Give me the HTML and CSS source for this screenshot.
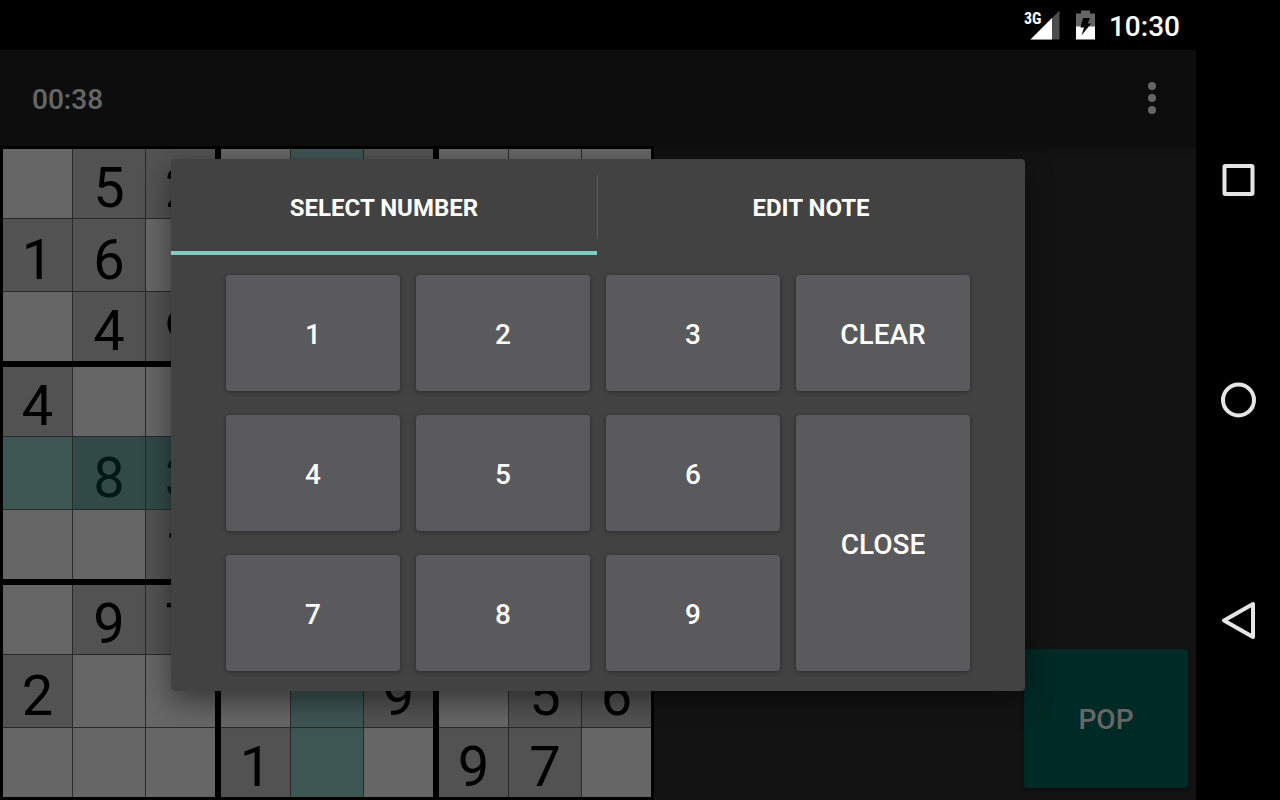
FILE: index.html
```html
<!DOCTYPE html>
<html lang="en">
<head>
<meta charset="utf-8">
<meta name="viewport" content="width=device-width, initial-scale=1">
<title>Sudoku</title>
<link rel="stylesheet" href="styles.css">
</head>
<body>
<div class="device">
  <div class="screen">
    <header class="status">
      <svg class="status-signal" viewBox="0 0 36 32" aria-hidden="true">
        <path fill="#4d4d4d" d="M35.500 1.500V30.500H6.500z"/>
        <path fill="#fff" d="M28 9V30.500H6.500z"/>
        <text class="status-net" x="0" y="15">3G</text>
      </svg>
      <svg class="status-battery" viewBox="0 0 20 30" aria-hidden="true">
        <path fill="#666" d="M1 3.500H6V0.500h9v3H20V17H1z"/>
        <path fill="#fff" d="M1 16.500H20V29.500H1z"/>
        <path fill="#000" d="M8 8H15L12.500 13.500H16L6.500 25.500L9 17.500H5.500z"/>
      </svg>
      <span class="status-clock">10:30</span>
    </header>
    <div class="app">
      <div class="toolbar">
        <span class="timer">00:38</span>
        <button class="menu" type="button" aria-label="More options">
          <svg viewBox="0 0 8 32" aria-hidden="true" fill="#fff"><circle cx="4" cy="4" r="4"/><circle cx="4" cy="16" r="4"/><circle cx="4" cy="28" r="4"/></svg>
        </button>
      </div>
      <main class="game">
        <div class="board">
          <div class="box">
            <div class="cell"></div><div class="cell given">5</div><div class="cell given">2</div>
            <div class="cell given">1</div><div class="cell given">6</div><div class="cell"></div>
            <div class="cell"></div><div class="cell given">4</div><div class="cell given">9</div>
          </div>
          <div class="box">
            <div class="cell"></div><div class="cell lit"></div><div class="cell given"></div>
            <div class="cell"></div><div class="cell lit"></div><div class="cell"></div>
            <div class="cell"></div><div class="cell lit"></div><div class="cell"></div>
          </div>
          <div class="box">
            <div class="cell"></div><div class="cell"></div><div class="cell"></div>
            <div class="cell"></div><div class="cell"></div><div class="cell"></div>
            <div class="cell"></div><div class="cell"></div><div class="cell"></div>
          </div>
          <div class="box">
            <div class="cell given">4</div><div class="cell"></div><div class="cell"></div>
            <div class="cell lit"></div><div class="cell given lit">8</div><div class="cell given lit">3</div>
            <div class="cell"></div><div class="cell"></div><div class="cell given">1</div>
          </div>
          <div class="box">
            <div class="cell"></div><div class="cell lit"></div><div class="cell"></div>
            <div class="cell lit"></div><div class="cell lit"></div><div class="cell lit"></div>
            <div class="cell"></div><div class="cell lit"></div><div class="cell"></div>
          </div>
          <div class="box">
            <div class="cell"></div><div class="cell"></div><div class="cell"></div>
            <div class="cell lit"></div><div class="cell lit"></div><div class="cell lit"></div>
            <div class="cell"></div><div class="cell"></div><div class="cell"></div>
          </div>
          <div class="box">
            <div class="cell"></div><div class="cell given">9</div><div class="cell given">7</div>
            <div class="cell given">2</div><div class="cell"></div><div class="cell"></div>
            <div class="cell"></div><div class="cell"></div><div class="cell"></div>
          </div>
          <div class="box">
            <div class="cell"></div><div class="cell lit"></div><div class="cell"></div>
            <div class="cell"></div><div class="cell lit"></div><div class="cell given">9</div>
            <div class="cell given">1</div><div class="cell lit"></div><div class="cell"></div>
          </div>
          <div class="box">
            <div class="cell"></div><div class="cell"></div><div class="cell"></div>
            <div class="cell"></div><div class="cell given">5</div><div class="cell given">6</div>
            <div class="cell given">9</div><div class="cell given">7</div><div class="cell"></div>
          </div>
        </div>
        <button class="pop" type="button">POP</button>
      </main>
      <div class="scrim">
        <section class="picker" role="dialog" aria-label="Select number">
          <div class="tabs" role="tablist">
            <button class="tab selected" type="button" role="tab" aria-selected="true">SELECT NUMBER</button>
            <button class="tab" type="button" role="tab" aria-selected="false">EDIT NOTE</button>
          </div>
          <div class="keys">
            <button class="key" type="button">1</button>
            <button class="key" type="button">2</button>
            <button class="key" type="button">3</button>
            <button class="key" type="button">CLEAR</button>
            <button class="key" type="button">4</button>
            <button class="key" type="button">5</button>
            <button class="key" type="button">6</button>
            <button class="key tall" type="button">CLOSE</button>
            <button class="key" type="button">7</button>
            <button class="key" type="button">8</button>
            <button class="key" type="button">9</button>
          </div>
        </section>
      </div>
    </div>
  </div>
  <nav class="system" aria-label="System">
    <button class="system-key" type="button" aria-label="Recent apps">
      <svg viewBox="0 0 40 40" aria-hidden="true"><rect x="4.500" y="6" width="28" height="28" rx="1"/></svg>
    </button>
    <button class="system-key" type="button" aria-label="Home">
      <svg viewBox="0 0 40 40" aria-hidden="true"><circle cx="18.500" cy="20" r="15.500"/></svg>
    </button>
    <button class="system-key" type="button" aria-label="Back">
      <svg viewBox="0 0 40 40" aria-hidden="true"><path d="M33 4V37L4 20.500z"/></svg>
    </button>
  </nav>
</div>
</body>
</html>
```
FILE: styles.css
```css
* { box-sizing: border-box; }
body {
  margin: 0;
  background: #000;
  color: #fff;
  font: 500 28px/32px Roboto, sans-serif;
}
button {
  margin: 0;
  padding: 0;
  border: 0;
  background: none;
  color: inherit;
  font: inherit;
}
svg { display: block; }
.device {
  display: flex;
  height: 100vh;
  overflow: hidden;
}
.screen {
  display: flex;
  flex: 1;
  flex-direction: column;
  min-width: 0;
}

.status {
  display: flex;
  align-items: center;
  justify-content: flex-end;
  height: 50px;
  padding-right: 16px;
}
.status-signal { width: 36px; height: 32px; margin-right: 15px; overflow: visible; }
.status-net { fill: #fff; font: 700 16px "Roboto Condensed", Roboto, sans-serif; }
.status-battery { width: 20px; height: 30px; margin-right: 14px; }
.status-clock { padding-top: 4px; }

.app {
  position: relative;
  display: flex;
  flex: 1;
  flex-direction: column;
  min-height: 0;
  background: #303030;
}
.toolbar {
  display: flex;
  align-items: center;
  justify-content: space-between;
  height: 96px;
  padding: 0 20px 0 32px;
  background: #212121;
  box-shadow: 0 2px 8px rgba(0, 0, 0, .4);
}
.timer { padding-top: 4px; }
.menu { display: grid; place-items: center; width: 48px; height: 48px; }
.menu svg { width: 8px; height: 32px; }

.game {
  display: flex;
  flex: 1;
  align-items: flex-end;
  justify-content: space-between;
  min-height: 0;
}
.board {
  display: grid;
  grid-template: repeat(3, minmax(0, 1fr)) / repeat(3, minmax(0, 1fr));
  gap: 6px;
  height: 100%;
  aspect-ratio: 1;
  padding: 3px;
  background: #000;
}
.box {
  display: grid;
  grid-template: 69fr 72fr 69fr / 69fr 72fr 69fr;
  gap: 1px;
  background: #666;
}
.cell {
  display: flex;
  align-items: center;
  justify-content: center;
  min-height: 0;
  padding-top: 9px;
  background: #fff;
  color: #000;
  font-size: 56px;
  font-weight: 400;
  line-height: 56px;
}
.given { background: #cecece; }
.lit { background: #99d5cf; }
.given.lit { background: #7cb8b2; color: #003c36; }

.pop {
  width: 164px;
  height: 139px;
  margin: 0 8px 12px 0;
  padding-top: 2px;
  border-radius: 4px;
  background: #00695c;
  box-shadow: 0 2px 4px rgba(0, 0, 0, .4);
}

.scrim {
  position: absolute;
  inset: 0;
  display: flex;
  align-items: center;
  padding: 0 171px;
  background: rgba(0, 0, 0, .6);
}
.picker {
  flex: 1;
  border-radius: 4px;
  background: #424242;
  box-shadow: 0 10px 28px rgba(0, 0, 0, .45);
}
.tabs {
  display: grid;
  grid-template-columns: 1fr 1fr;
}
.tab {
  height: 96px;
  padding-top: 6px;
  border-bottom: 4px solid transparent;
  font-size: 24px;
  font-weight: 700;
  line-height: 28px;
}
.tab + .tab {
  margin-left: -1px;
  background: linear-gradient(#5a5a5a, #5a5a5a) 0 16px / 1px 64px no-repeat;
}
.selected {
  margin-right: 1px;
  border-bottom-color: #80cbc4;
}
.keys {
  display: grid;
  grid-template-columns: repeat(4, 1fr);
  grid-auto-rows: 116px;
  gap: 24px 16px;
  padding: 20px 55px;
}
.key {
  padding-top: 4px;
  border-radius: 4px;
  background: #5a5a5c;
  box-shadow: 0 1px 4px rgba(0, 0, 0, .4);
}
.tall { grid-row: span 2; }

.system {
  display: flex;
  flex-direction: column;
  justify-content: center;
  gap: 60px;
  width: 84px;
  background: #000;
}
.system-key { display: grid; place-items: center; height: 160px; }
.system-key svg {
  width: 40px;
  height: 40px;
  margin-left: 4px;
  fill: none;
  stroke: #e6e6e6;
  stroke-width: 4;
  stroke-linejoin: round;
}
```
